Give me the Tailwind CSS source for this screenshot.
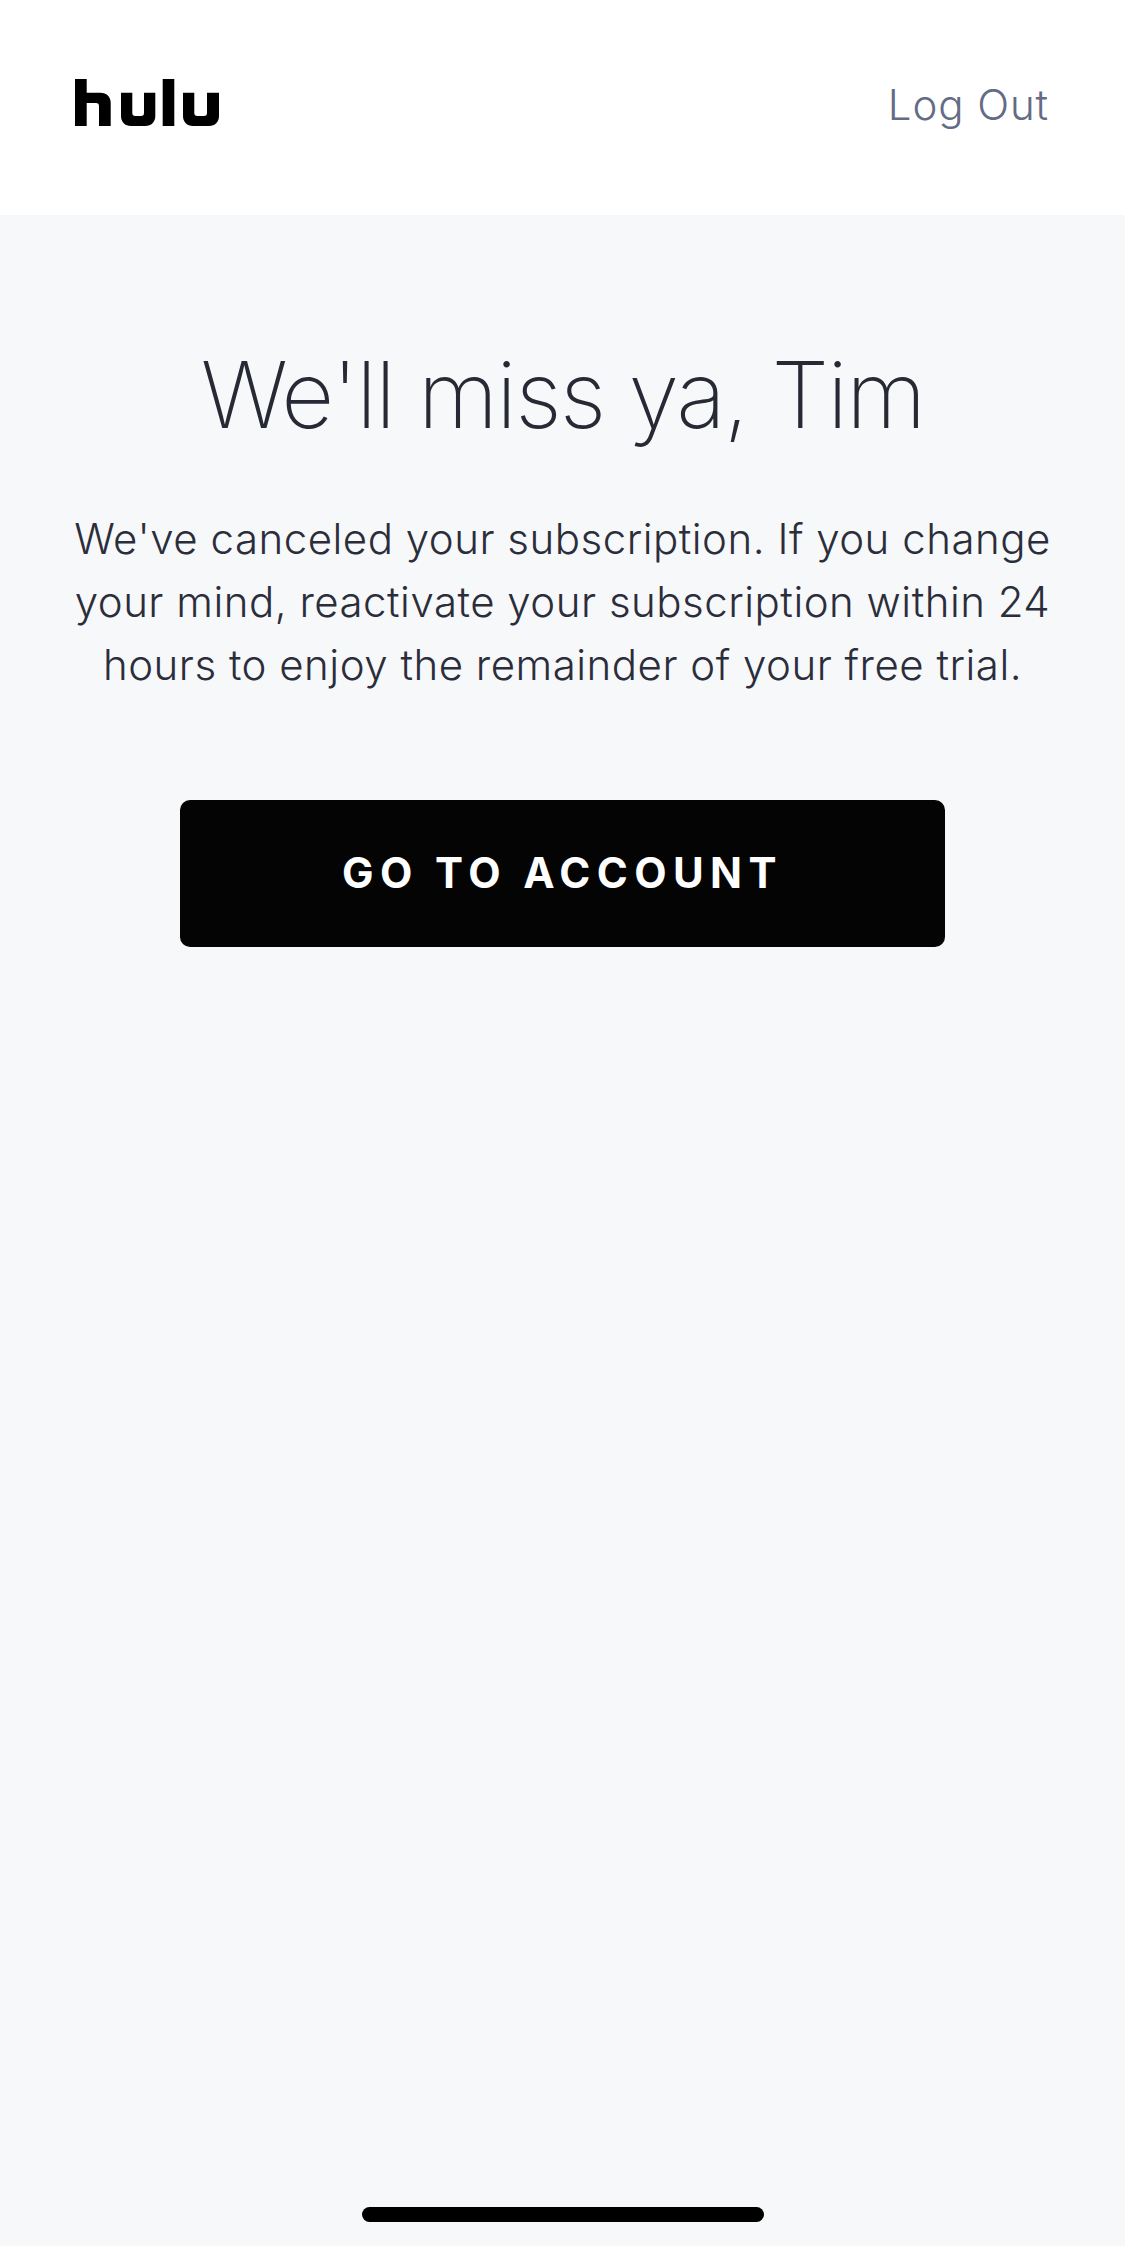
<!DOCTYPE html>
<html lang="en">
<head>
    <meta charset="UTF-8">
    <meta name="viewport" content="width=device-width, initial-scale=1.0">
    <title>Hulu</title>
    <script src="https://cdn.jsdelivr.net/npm/@tailwindcss/browser@4"></script>
</head>
<body class="bg-[#f7f8fa] font-['Inter',sans-serif] relative h-screen overflow-hidden flex flex-col">
    <!-- Header -->
    <header class="h-[215px] bg-white flex items-center justify-between pl-[75px] pr-[76px] shrink-0">
        <svg class="w-[144px] h-[47px] mb-[10px]" viewBox="0 0 144 47" fill="#000">
            <path d="M0 0h11.7v13.7H25.5c6 0 10.2 4 10.2 10V47H24V27c0-2-1-3-3-3H11.7V47H0Z"/>
            <path d="M46 13.7h11.3V34c0 2 1 3 3 3h5.7c2 0 3-1 3-3V13.7H80.3V37c0 6-4 10-10 10H56c-6 0-10-4-10-10Z"/>
            <rect x="87.7" y="0" width="11.6" height="47"/>
            <path d="M108 13.7h11.3V34c0 2 1 3 3 3h6.7c2 0 3-1 3-3V13.7H144V37c0 6-4 10-10 10H118c-6 0-10-4-10-10Z"/>
        </svg>
        <a class="text-[#636b85] text-[42px] leading-[50px] mb-[5px] tracking-[0.9px] font-[350]">Log Out</a>
    </header>

    <!-- Content -->
    <main class="flex flex-col items-center pt-[128px]">
        <h1 class="text-[#272a35] text-[92px] leading-[104px] font-[250] tracking-[-1.8px] text-center">We'll miss ya, Tim</h1>
        <p class="mt-[60px] text-[#2b2e3a] text-[42px] leading-[63px] font-[350] tracking-[0.5px] text-center w-[1000px]">We've canceled your subscription. If you change your mind, reactivate your subscription within 24 hours to enjoy the remainder of your free trial.</p>
        <a class="mt-[104px] w-[765px] h-[147px] pb-[2px] bg-[#040405] rounded-[10px] flex items-center justify-center text-white text-[42px] font-bold tracking-[6.4px]">GO TO ACCOUNT</a>
    </main>

    <!-- Home indicator -->
    <div class="absolute bottom-[24px] left-[362px] w-[402px] h-[15px] rounded-full bg-black"></div>
</body>
</html>
